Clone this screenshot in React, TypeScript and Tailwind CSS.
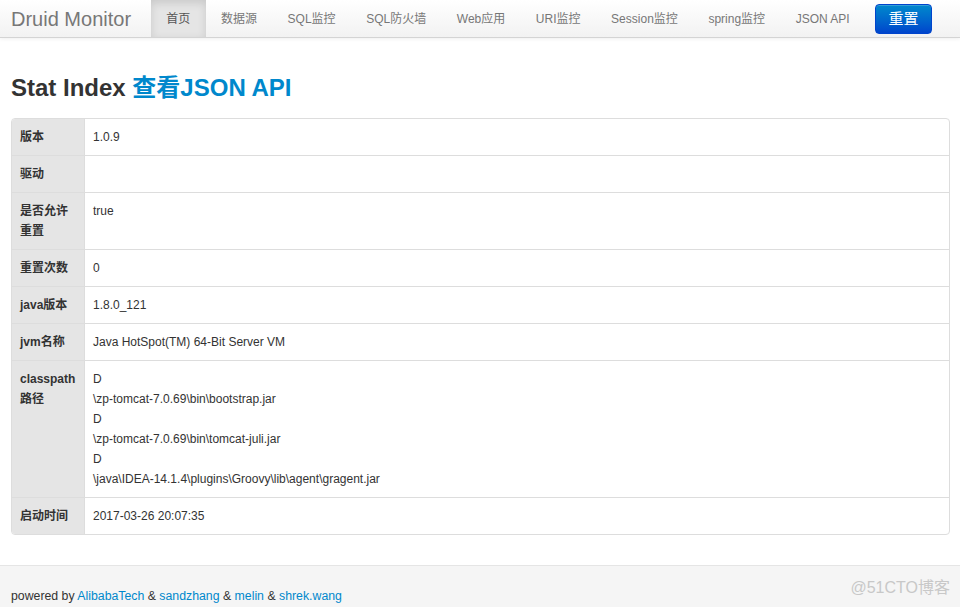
import React from 'react';

const navItems = ['首页', '数据源', 'SQL监控', 'SQL防火墙', 'Web应用', 'URI监控', 'Session监控', 'spring监控', 'JSON API'];

const rows: { label: string; value: string[] }[] = [
  { label: '版本', value: ['1.0.9'] },
  { label: '驱动', value: [] },
  { label: '是否允许重置', value: ['true'] },
  { label: '重置次数', value: ['0'] },
  { label: 'java版本', value: ['1.8.0_121'] },
  { label: 'jvm名称', value: ['Java HotSpot(TM) 64-Bit Server VM'] },
  {
    label: 'classpath路径',
    value: [
      'D',
      '\\zp-tomcat-7.0.69\\bin\\bootstrap.jar',
      'D',
      '\\zp-tomcat-7.0.69\\bin\\tomcat-juli.jar',
      'D',
      '\\java\\IDEA-14.1.4\\plugins\\Groovy\\lib\\agent\\gragent.jar',
    ],
  },
  { label: '启动时间', value: ['2017-03-26 20:07:35'] },
];

export default function App() {
  return (
    <div className="relative min-h-[607px] bg-white font-['Liberation_Sans','Noto_Sans_CJK_SC',sans-serif] text-[12px] leading-5 text-[#333]">
      {/* Navbar */}
      <div className="flex h-[38px] items-stretch border-b border-[#d4d4d4] bg-gradient-to-b from-white to-[#f2f2f2] pl-[11px] shadow-[0_1px_4px_rgba(0,0,0,0.065)]">
        <span className="flex items-center pr-5 text-[20px] text-[#777]">Druid Monitor</span>
        {navItems.map((item, i) => (
          <a
            key={item}
            className={
              i === 0
                ? 'flex items-center bg-[#e5e5e5] px-[15.3px] text-[#555] shadow-[inset_0_3px_8px_rgba(0,0,0,0.125)]'
                : 'flex items-center px-[15.3px] text-[#777]'
            }
          >
            {item}
          </a>
        ))}
        <div className="flex items-center pl-[10px]">
          <button className="h-[30px] w-[57px] rounded border border-[#0044cc] bg-gradient-to-b from-[#0088cc] to-[#0044cc] text-[15px] text-white shadow-[inset_0_1px_0_rgba(255,255,255,0.2)]">
            重置
          </button>
        </div>
      </div>

      {/* Content */}
      <div className="pl-[11px] pr-[10px]">
        <h1 className="mt-[30px] mb-[10px] text-[24px] font-bold leading-10 text-[#333]">
          Stat Index <a className="text-[#0088cc]">查看JSON API</a>
        </h1>

        <div className="overflow-hidden rounded border border-[#ddd]">
          {rows.map((row, i) => (
            <div key={row.label} className={i === 0 ? 'flex' : 'flex border-t border-[#ddd]'}>
              <div className="w-[72px] shrink-0 bg-[#e5e5e5] p-2 font-bold">{row.label}</div>
              <div className="flex-1 border-l border-[#ddd] p-2">
                {row.value.map((v, j) => (
                  <div key={j}>{v}</div>
                ))}
              </div>
            </div>
          ))}
        </div>
      </div>

      {/* Footer */}
      <div className="mt-[30px] h-[42px] border-t border-[#e5e5e5] bg-[#f5f5f5] pl-[11px] pt-5 text-[12.3px]">
        powered by <a className="text-[#0088cc]">AlibabaTech</a> &amp; <a className="text-[#0088cc]">sandzhang</a> &amp;{' '}
        <a className="text-[#0088cc]">melin</a> &amp; <a className="text-[#0088cc]">shrek.wang</a>
      </div>

      <span className="absolute right-[10px] bottom-[9px] text-[16px] text-[#c8c8c8]">@51CTO博客</span>
    </div>
  );
}
